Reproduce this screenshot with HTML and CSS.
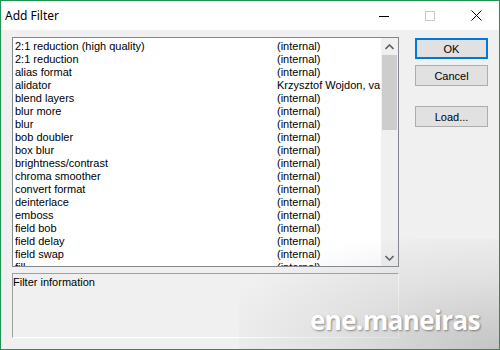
FILE: index.html
```html
<!DOCTYPE html>
<html>
<head>
<meta charset="utf-8">
<link rel="stylesheet" href="styles.css">
</head>
<body>
<div class="window">
  <div class="titlebar">
    <span class="title">Add Filter</span>
    <div class="caption-btns">
      <span class="cap"><svg width="10" height="10" viewBox="0 0 10 10"><path d="M0 5.5H10" stroke="#000" stroke-width="1"/></svg></span>
      <span class="cap"><svg width="10" height="10" viewBox="0 0 10 10"><rect x="0.5" y="0.5" width="9" height="9" fill="none" stroke="#c6c6c6" stroke-width="1"/></svg></span>
      <span class="cap"><svg width="11" height="11" viewBox="0 0 11 11"><path d="M0.5 0.5L10.5 10.5M10.5 0.5L0.5 10.5" stroke="#000" stroke-width="1"/></svg></span>
    </div>
  </div>
  <div class="client">
    <div class="left">
      <div class="listbox">
        <div class="rows">
          <div class="row"><span class="c1">2:1 reduction (high quality)</span><span class="c2">(internal)</span></div>
          <div class="row"><span class="c1">2:1 reduction</span><span class="c2">(internal)</span></div>
          <div class="row"><span class="c1">alias format</span><span class="c2">(internal)</span></div>
          <div class="row"><span class="c1">alidator</span><span class="c2">Krzysztof Wojdon, va</span></div>
          <div class="row"><span class="c1">blend layers</span><span class="c2">(internal)</span></div>
          <div class="row"><span class="c1">blur more</span><span class="c2">(internal)</span></div>
          <div class="row"><span class="c1">blur</span><span class="c2">(internal)</span></div>
          <div class="row"><span class="c1">bob doubler</span><span class="c2">(internal)</span></div>
          <div class="row"><span class="c1">box blur</span><span class="c2">(internal)</span></div>
          <div class="row"><span class="c1">brightness/contrast</span><span class="c2">(internal)</span></div>
          <div class="row"><span class="c1">chroma smoother</span><span class="c2">(internal)</span></div>
          <div class="row"><span class="c1">convert format</span><span class="c2">(internal)</span></div>
          <div class="row"><span class="c1">deinterlace</span><span class="c2">(internal)</span></div>
          <div class="row"><span class="c1">emboss</span><span class="c2">(internal)</span></div>
          <div class="row"><span class="c1">field bob</span><span class="c2">(internal)</span></div>
          <div class="row"><span class="c1">field delay</span><span class="c2">(internal)</span></div>
          <div class="row"><span class="c1">field swap</span><span class="c2">(internal)</span></div>
          <div class="row"><span class="c1">fill</span><span class="c2">(internal)</span></div>
        </div>
        <div class="scrollbar">
          <div class="arrow"><svg width="9" height="6" viewBox="0 0 9 6"><path d="M0.5 5L4.5 1L8.5 5" fill="none" stroke="#606060" stroke-width="1.6"/></svg></div>
          <div class="track"><div class="thumb"></div></div>
          <div class="arrow"><svg width="9" height="6" viewBox="0 0 9 6"><path d="M0.5 1L4.5 5L8.5 1" fill="none" stroke="#606060" stroke-width="1.6"/></svg></div>
        </div>
      </div>
      <div class="infobox">Filter information</div>
    </div>
    <div class="buttons">
      <div class="btn default">OK</div>
      <div class="btn">Cancel</div>
      <div class="btn load">Load...</div>
    </div>
  </div>
  <div class="watermark">ene.maneiras</div>
</div>
</body>
</html>
```

FILE: styles.css
```css
* { box-sizing: border-box; }
html, body { margin: 0; padding: 0; }
body { width: 500px; height: 350px; overflow: hidden; background: #f0f0f0; }

.window {
  position: relative;
  width: 500px;
  height: 350px;
  border: 1px solid #1f9350;
  background: #f0f0f0;
  display: flex;
  flex-direction: column;
  overflow: hidden;
}

.titlebar {
  height: 29px;
  background: #fff;
  display: flex;
  align-items: center;
  justify-content: space-between;
  flex: none;
}
.title {
  font-family: "Noto Sans", sans-serif;
  font-size: 12px;
  color: #000;
  padding-left: 4px;
  padding-bottom: 1px;
}
.caption-btns { display: flex; height: 29px; }
.cap {
  width: 46px;
  height: 29px;
  display: flex;
  align-items: center;
  justify-content: center;
}

.client {
  flex: 1;
  display: flex;
  padding: 7px 0 0 11px;
  font-family: "Liberation Sans", Arial, sans-serif;
  font-size: 11px;
  color: #000;
}

.left { display: flex; flex-direction: column; width: 387px; }

.listbox {
  width: 387px;
  height: 230px;
  border: 1px solid #828790;
  background: #fff;
  display: flex;
  overflow: hidden;
}
.rows {
  flex: 1;
  padding: 2px 0 0 2px;
  overflow: hidden;
}
.row {
  height: 13px;
  line-height: 13px;
  display: flex;
  white-space: nowrap;
}
.c1 { width: 262px; flex: none; }
.c2 { flex: none; }

.scrollbar {
  width: 17px;
  flex: none;
  background: #f0f0f0;
  display: flex;
  flex-direction: column;
}
.arrow {
  height: 17px;
  display: flex;
  align-items: center;
  justify-content: center;
  flex: none;
}
.track { flex: 1; padding: 0 1px; }
.thumb { height: 75px; background: #cdcdcd; }

.infobox {
  margin-top: 6px;
  height: 65px;
  border-top: 1px solid #a0a0a0;
  border-left: 1px solid #a0a0a0;
  border-right: 1px solid #fff;
  border-bottom: 1px solid #fff;
  line-height: 14px;
  padding-top: 1px;
}

.buttons {
  display: flex;
  flex-direction: column;
  margin-left: 16px;
  padding-top: 1px;
}
.btn {
  width: 73px;
  height: 21px;
  border: 1px solid #adadad;
  background: #e1e1e1;
  display: flex;
  align-items: center;
  justify-content: center;
  margin-bottom: 6px;
}
.btn.default { border: 2px solid #0078d7; }
.btn.load { margin-top: 14px; }

.watermark {
  position: absolute;
  right: 0;
  bottom: 0;
  width: 260px;
  height: 110px;
  background: radial-gradient(ellipse at 100% 100%, rgba(130,130,130,0.4) 0%, rgba(170,170,170,0.22) 45%, rgba(240,240,240,0) 80%);
  display: flex;
  align-items: flex-end;
  justify-content: flex-end;
  padding: 0 19px 14px 0;
  font-family: "Open Sans", "DejaVu Sans", sans-serif;
  font-weight: 700;
  font-size: 26px;
  line-height: 30px;
  color: #fff;
  text-shadow: 1px 1px 2px rgba(0,0,0,0.4);
  letter-spacing: -0.6px;
}
```
